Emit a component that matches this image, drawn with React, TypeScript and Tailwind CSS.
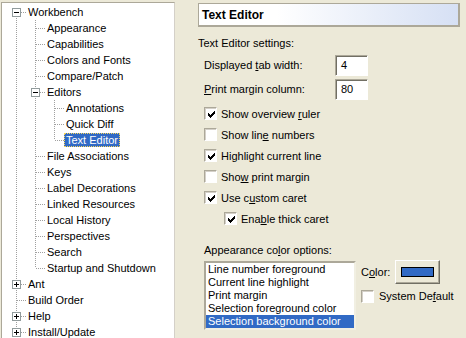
import React from "react";

type Cell = "pipe" | "tee" | "ell" | "down";

type TreeItem = {
  label: string;
  cells: Cell[];
  box?: "minus" | "plus";
  selected?: boolean;
};

const tree: TreeItem[] = [
  { label: "Workbench", cells: ["down"], box: "minus" },
  { label: "Appearance", cells: ["pipe", "tee"] },
  { label: "Capabilities", cells: ["pipe", "tee"] },
  { label: "Colors and Fonts", cells: ["pipe", "tee"] },
  { label: "Compare/Patch", cells: ["pipe", "tee"] },
  { label: "Editors", cells: ["pipe", "tee"], box: "minus" },
  { label: "Annotations", cells: ["pipe", "pipe", "tee"] },
  { label: "Quick Diff", cells: ["pipe", "pipe", "tee"] },
  { label: "Text Editor", cells: ["pipe", "pipe", "ell"], selected: true },
  { label: "File Associations", cells: ["pipe", "tee"] },
  { label: "Keys", cells: ["pipe", "tee"] },
  { label: "Label Decorations", cells: ["pipe", "tee"] },
  { label: "Linked Resources", cells: ["pipe", "tee"] },
  { label: "Local History", cells: ["pipe", "tee"] },
  { label: "Perspectives", cells: ["pipe", "tee"] },
  { label: "Search", cells: ["pipe", "tee"] },
  { label: "Startup and Shutdown", cells: ["pipe", "ell"] },
  { label: "Ant", cells: ["tee"], box: "plus" },
  { label: "Build Order", cells: ["tee"] },
  { label: "Help", cells: ["tee"], box: "plus" },
  { label: "Install/Update", cells: ["tee"], box: "plus" },
];

const LINE = "#a0a0a0";

const GuideCell = ({ kind, box }: { kind: Cell; box?: "minus" | "plus" }) => {
  const vTop = kind === "down" ? 8 : 0;
  const vBottom = kind === "ell" ? 8 : 16;
  return (
    <svg width="19" height="16" className="shrink-0" shapeRendering="crispEdges">
      <line x1="9.5" y1={vTop} x2="9.5" y2={vBottom} stroke={LINE} strokeDasharray="1 1" />
      {kind !== "pipe" && (
        <line x1="10" y1="8.5" x2="19" y2="8.5" stroke={LINE} strokeDasharray="1 1" />
      )}
      {box && (
        <>
          <rect x="5.5" y="4.5" width="8" height="8" fill="white" stroke="#919b9c" />
          <line x1="7" y1="8.5" x2="12" y2="8.5" stroke="black" />
          {box === "plus" && <line x1="9.5" y1="6" x2="9.5" y2="11" stroke="black" />}
        </>
      )}
    </svg>
  );
};

const Check = () => (
  <svg width="9" height="9" viewBox="0 0 9 9" shapeRendering="crispEdges" className="absolute left-[2px] top-[2px]">
    <path
      d="M7 1h1v1h-1zM6 2h2v1h-2zM1 3h1v1h-1zM5 3h3v1h-3zM1 4h2v1h-2zM4 4h3v1h-3zM1 5h5v1h-5zM2 6h3v1h-3zM3 7h1v1h-1z"
      fill="black"
    />
  </svg>
);

const CheckBox = ({ checked }: { checked?: boolean }) => (
  <span className="relative block h-[13px] w-[13px] shrink-0 border border-t-[#aca899] border-l-[#aca899] border-b-white border-r-white bg-white shadow-[inset_1px_1px_0_#d4d0c8]">
    {checked && <Check />}
  </span>
);

const CheckRow = ({
  checked,
  indent,
  children,
}: {
  checked?: boolean;
  indent?: boolean;
  children: React.ReactNode;
}) => (
  <div className={`flex h-[21px] items-center gap-[4px] ${indent ? "pl-[20px]" : ""}`}>
    <CheckBox checked={checked} />
    <span className="leading-[14px]">{children}</span>
  </div>
);

const TextInput = ({ value }: { value: string }) => (
  <div className="flex h-[21px] w-[33px] items-center border border-t-[#aca899] border-l-[#aca899] border-b-white border-r-white bg-white pl-[5px] shadow-[inset_1px_1px_0_#716f64]">
    {value}
  </div>
);

const colorOptions = [
  "Line number foreground",
  "Current line highlight",
  "Print margin",
  "Selection foreground color",
  "Selection background color",
];

export default function App() {
  return (
    <div className="flex h-[338px] w-[466px] overflow-hidden bg-[#ece9d8] font-['Liberation_Sans','DejaVu_Sans',sans-serif] text-[11px] text-black">
      {/* preference tree */}
      <div className="ml-[1px] mt-[2px] h-[345px] w-[174px] shrink-0 border border-t-[#aca899] border-l-[#aca899] border-r-[#d4d0c8] border-b-[#d4d0c8] bg-white pl-[5px] pt-[1px]">
        {tree.map((item) => (
          <div key={item.label} className="flex h-[16px] items-center whitespace-nowrap">
            {item.cells.map((c, i) => (
              <GuideCell key={i} kind={c} box={i === item.cells.length - 1 ? item.box : undefined} />
            ))}
            <span
              className={
                item.selected
                  ? "flex h-[14px] items-center bg-[#316ac5] pl-[2px] pr-[2px] text-white outline-1 outline-dotted outline-offset-[-1px] outline-[#f6d55b]"
                  : "pl-[2px]"
              }
            >
              {item.label}
            </span>
          </div>
        ))}
      </div>

      {/* page */}
      <div className="flex flex-1 flex-col pl-[23px] pr-[6px] pt-[3px]">
        <div className="flex h-[24px] items-center border border-[#aca899] border-r-2 border-b-2 bg-linear-to-r from-white from-30% to-[#d6e0f4] pl-[3px] text-[12px] font-bold">
          Text Editor
        </div>

        <div className="mt-[9px] h-[14px] leading-[14px]">Text Editor settings:</div>

        <div className="ml-[6px]">
          <div className="mt-[5px] flex items-center">
            <span className="w-[131px]">
              Displayed <u>t</u>ab width:
            </span>
            <TextInput value="4" />
          </div>
          <div className="mt-[3px] flex items-center">
            <span className="w-[131px]">
              <u>P</u>rint margin column:
            </span>
            <TextInput value="80" />
          </div>

          <div className="mt-[3px]">
            <CheckRow checked>
              Show overview <u>r</u>uler
            </CheckRow>
            <CheckRow>
              Show lin<u>e</u> numbers
            </CheckRow>
            <CheckRow checked>
              Hi<u>g</u>hlight current line
            </CheckRow>
            <CheckRow>
              Sho<u>w</u> print margin
            </CheckRow>
            <CheckRow checked>
              Use c<u>u</u>stom caret
            </CheckRow>
            <CheckRow checked indent>
              Ena<u>b</u>le thick caret
            </CheckRow>
          </div>

          <div className="mt-[14px] h-[14px] leading-[14px]">
            Appearance co<u>l</u>or options:
          </div>

          <div className="mt-[3px] flex items-start">
            <div className="mt-[1px] w-[152px] border-2 border-t-[#aca899] border-l-[#aca899] border-r-[#f1efe2] border-b-[#f1efe2] bg-white">
              {colorOptions.map((o, i) => (
                <div
                  key={o}
                  className={`h-[13px] whitespace-nowrap pl-[2px] leading-[13px] ${
                    i === colorOptions.length - 1 ? "bg-[#316ac5] text-white" : ""
                  }`}
                >
                  {o}
                </div>
              ))}
            </div>

            <div className="ml-[5px] flex flex-col">
              <div className="flex h-[24px] items-center">
                <span className="w-[34px]">
                  C<u>o</u>lor:
                </span>
                <div className="flex h-[24px] w-[45px] items-center justify-center border border-t-white border-l-white border-r-[#716f64] border-b-[#716f64] bg-[#ece9d8] shadow-[inset_-1px_-1px_0_#aca899]">
                  <div className="h-[10px] w-[33px] border border-black bg-[#316ac5]" />
                </div>
              </div>
              <div className="mt-[6px] flex h-[13px] items-center gap-[5px]">
                <CheckBox />
                <span>
                  System De<u>f</u>ault
                </span>
              </div>
            </div>
          </div>
        </div>
      </div>
    </div>
  );
}
